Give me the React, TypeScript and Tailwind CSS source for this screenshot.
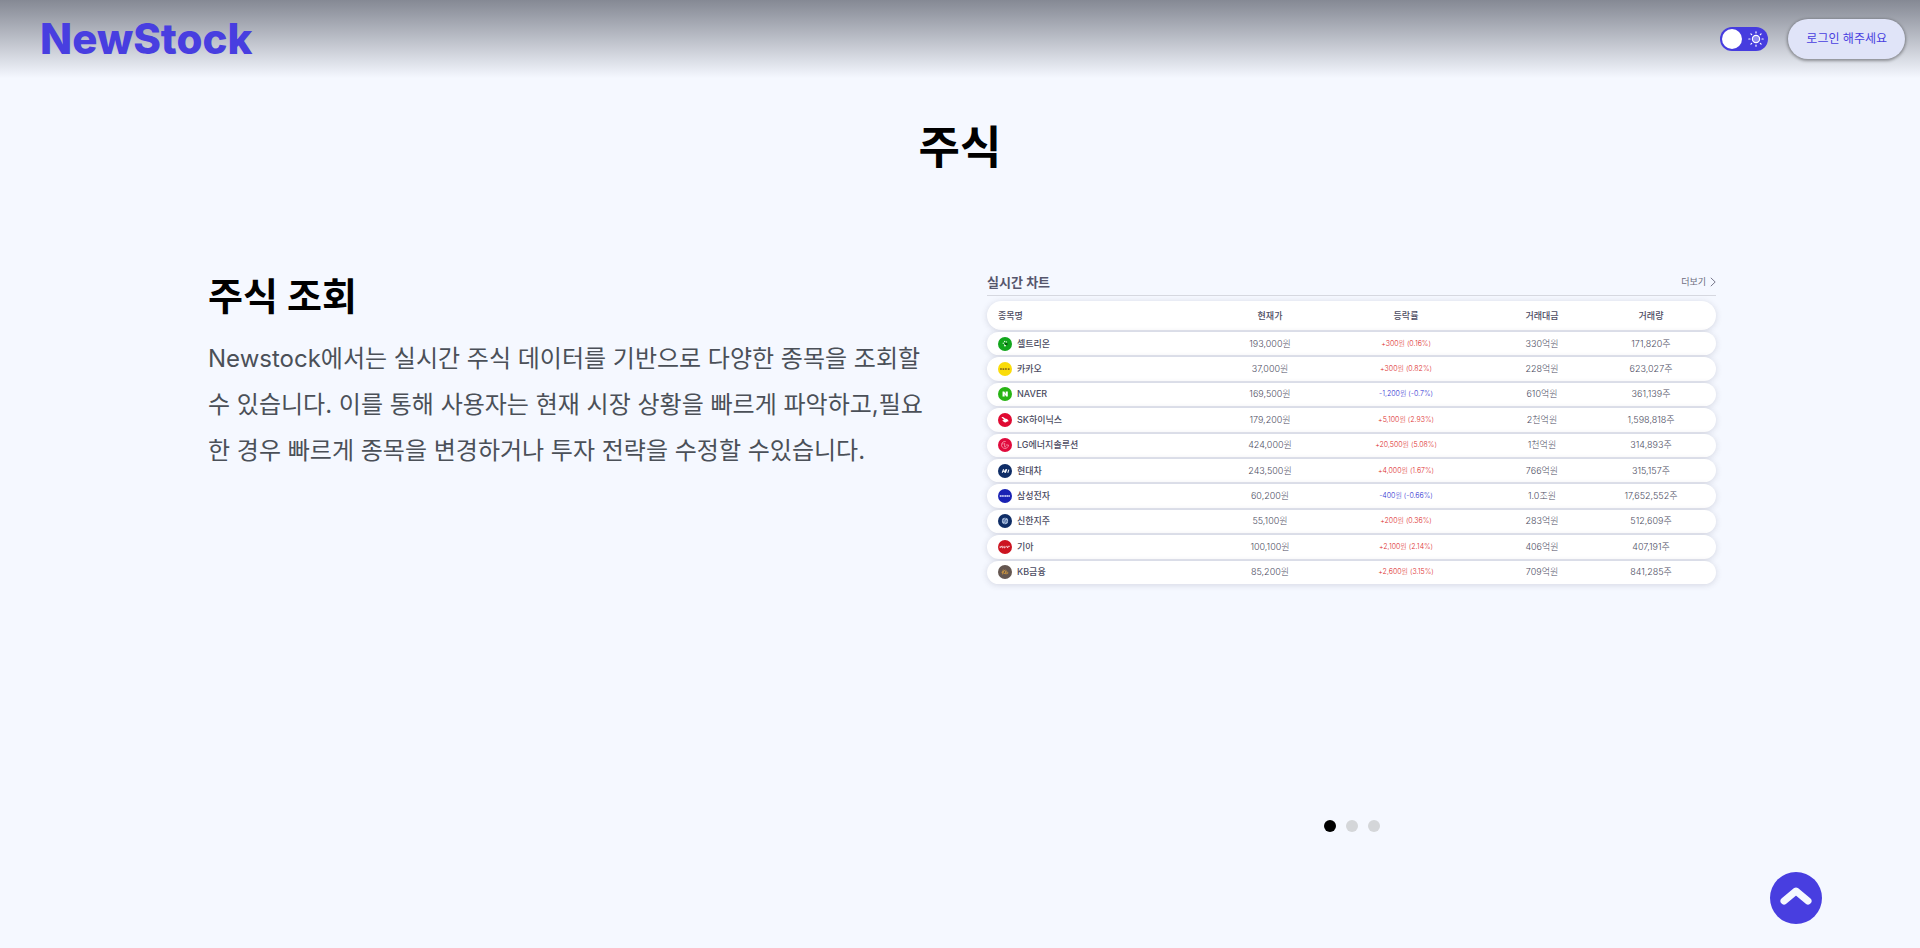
import type { ReactNode } from "react";

type Stock = {
  name: string;
  color: string;
  mark: ReactNode;
  price: string;
  change: string;
  amount: string;
  volume: string;
};

const stocks: Stock[] = [
  {
    name: "셀트리온",
    color: "#12a61c",
    mark: (
      <g fill="#dff5df">
        <circle cx="15" cy="18" r="2" />
        <circle cx="19" cy="13" r="2" />
        <circle cx="24" cy="14" r="2" />
        <circle cx="20" cy="24" r="3" />
        <rect x="20" y="17" width="7" height="6" fill="#0a5c10" />
      </g>
    ),
    price: "193,000원",
    change: "+300원 (0.16%)",
    amount: "330억원",
    volume: "171,820주",
  },
  {
    name: "카카오",
    color: "#fadc0a",
    mark: (
      <g fill="#8a6a14">
        <path d="M6 17h2v2l2-2h2l-2 3 2 3h-2l-2-2v2H6zM13 18h5v5h-5zM20 17h2v2l2-2h2l-2 3 2 3h-2l-2-2v2h-2zM28 18h5v5h-5z" />
      </g>
    ),
    price: "37,000원",
    change: "+300원 (0.82%)",
    amount: "228억원",
    volume: "623,027주",
  },
  {
    name: "NAVER",
    color: "#28b414",
    mark: <path fill="#fff" d="M13 13h5l4 7v-7h6v14h-5l-4-7v7h-6z" />,
    price: "169,500원",
    change: "-1,200원 (-0.7%)",
    amount: "610억원",
    volume: "361,139주",
  },
  {
    name: "SK하이닉스",
    color: "#e00a32",
    mark: (
      <path fill="#fff" d="M10 13c4-3 7 0 10 3 4 0 8 2 11 8-5-1-6 3-10 3s-5-4-9-5c2-2 4-2 5-1-1-4-4-6-7-8z" />
    ),
    price: "179,200원",
    change: "+5,100원 (2.93%)",
    amount: "2천억원",
    volume: "1,598,818주",
  },
  {
    name: "LG에너지솔루션",
    color: "#e00a3c",
    mark: (
      <g fill="none" stroke="#ffb4c4" strokeWidth="2">
        <path d="M22 10a10 10 0 1 0 8 10h-7" />
        <path d="M19 14v11h4" />
        <circle cx="14" cy="17" r="1" />
      </g>
    ),
    price: "424,000원",
    change: "+20,500원 (5.08%)",
    amount: "1천억원",
    volume: "314,893주",
  },
  {
    name: "현대차",
    color: "#0f2d66",
    mark: (
      <path d="M12 25l4-10M21 25l4-10M14 21c4 0 6-2 9-2M19 25l4-10M28 25l3-9" fill="none" stroke="#fff" strokeWidth="3" />
    ),
    price: "243,500원",
    change: "+4,000원 (1.67%)",
    amount: "766억원",
    volume: "315,157주",
  },
  {
    name: "삼성전자",
    color: "#1a22b4",
    mark: <path d="M5 20h30" stroke="#e6e8ff" strokeWidth="4" strokeDasharray="4 1" />,
    price: "60,200원",
    change: "-400원 (-0.66%)",
    amount: "1.0조원",
    volume: "17,652,552주",
  },
  {
    name: "신한지주",
    color: "#0f2d66",
    mark: (
      <g>
        <circle cx="20" cy="20" r="9" fill="#a9bddc" />
        <path d="M23 13c-6 0-7 4-3 6s4 6-3 8M14 17l4 6M23 17l3 5" fill="none" stroke="#2c4f8c" strokeWidth="2" />
      </g>
    ),
    price: "55,100원",
    change: "+200원 (0.36%)",
    amount: "283억원",
    volume: "512,609주",
  },
  {
    name: "기아",
    color: "#cc1420",
    mark: (
      <path d="M6 23v-5M6 21l6-4v6l6-5v5l6-5 4 5v-5h6" fill="none" stroke="#fff" strokeWidth="2" />
    ),
    price: "100,100원",
    change: "+2,100원 (2.14%)",
    amount: "406억원",
    volume: "407,191주",
  },
  {
    name: "KB금융",
    color: "#645650",
    mark: (
      <path d="M10 21l4-2M15 13l-2 14M21 14l-8 7 7 4M20 20h6c3 0 3 5 0 5h-5l2-10" fill="none" stroke="#e0a03c" strokeWidth="2" />
    ),
    price: "85,200원",
    change: "+2,600원 (3.15%)",
    amount: "709억원",
    volume: "841,285주",
  },
];

const rowGrid =
  "grid grid-cols-[215fr_136fr_136fr_136fr_82fr_24fr] items-center rounded-full bg-white shadow-[0_1px_6px_rgba(60,60,90,0.18)]";

function Header() {
  return (
    <header className="flex h-[78px] items-center justify-between bg-linear-to-b from-[#858994] to-[#f5f8ff] pr-[15px] pl-10">
      <a href="#" className="text-[42px] leading-none font-extrabold text-[#483ee0]">
        NewStock
      </a>
      <div className="flex items-center gap-5">
        <button
          type="button"
          role="switch"
          aria-checked="false"
          aria-label="테마 전환"
          className="flex h-6 w-12 items-center justify-between rounded-full bg-[#463cdf] pr-1 pl-0.5"
        >
          <span className="size-5 rounded-full bg-white" />
          <svg viewBox="0 0 16 16" className="size-4" fill="none" stroke="#fff" strokeLinecap="round">
            <circle cx="8" cy="8" r="3.6" fill="#8f8aee" strokeWidth="1.2" />
            <path
              d="M8 .8v1.2M8 14v1.2M.8 8H2M14 8h1.2M2.9 2.9l.8.8M12.3 12.3l.8.8M2.9 13.1l.8-.8M12.3 3.7l.8-.8"
              strokeWidth="1.2"
            />
          </svg>
        </button>
        <button
          type="button"
          className="h-10 rounded-full bg-[#e0e4f8] px-[18px] text-xs text-[#483ee0] shadow-[0_1px_3px_1px_rgba(0,0,0,0.35)]"
        >
          로그인 해주세요
        </button>
      </div>
    </header>
  );
}

function StockTable() {
  return (
    <div className="text-[#4c4c62]">
      <div className="flex h-6 items-center justify-between border-b border-[#d6d8e0] pb-1">
        <h4 className="text-[13px] leading-5 font-semibold text-[#56566c]">실시간 차트</h4>
        <a href="#" className="flex items-center gap-1 text-[9px] leading-5 text-[#6b6b7c]">
          더보기
          <svg viewBox="0 0 6 10" className="h-[10px] w-[6px]" fill="none" stroke="#77778a">
            <path d="M.8.8 5.2 5 .8 9.2" />
          </svg>
        </a>
      </div>
      <table className="mt-[5px] block text-[9px] leading-3">
        <thead className="block">
          <tr className={`${rowGrid} h-[29px] font-medium`}>
            <th scope="col" className="pl-[11px] text-left font-medium">종목명</th>
            <th scope="col" className="font-medium">현재가</th>
            <th scope="col" className="font-medium">등락률</th>
            <th scope="col" className="font-medium">거래대금</th>
            <th scope="col" className="font-medium">거래량</th>
          </tr>
        </thead>
        <tbody className="mt-0.5 grid h-[252px] auto-rows-fr gap-0.5 text-center font-light">
          {stocks.map((s) => (
            <tr key={s.name} className={rowGrid}>
              <td className="flex items-center gap-[5px] pl-[11px] font-medium">
                <svg viewBox="0 0 40 40" className="size-[14px]" aria-hidden="true">
                  <circle cx="20" cy="20" r="20" fill={s.color} />
                  {s.mark}
                </svg>
                {s.name}
              </td>
              <td>{s.price}</td>
              <td className={s.change.startsWith("-") ? "text-[7px] text-[#2a2ad0]" : "text-[7px] text-[#dc2828]"}>
                {s.change}
              </td>
              <td>{s.amount}</td>
              <td className="whitespace-nowrap">{s.volume}</td>
            </tr>
          ))}
        </tbody>
      </table>
    </div>
  );
}

export default function App() {
  return (
    <div className="min-h-screen bg-[#f5f8ff] font-['Inter','Noto_Sans_CJK_KR',sans-serif] text-black" lang="ko">
      <Header />
      <main className="mx-auto w-4/5">
        <h2 className="pt-[38px] text-center text-[45px] leading-16 font-bold">주식</h2>
        <section className="mt-[88px] grid grid-cols-2">
          <div className="pr-8 pl-4">
            <h3 className="text-[38px] leading-14 font-bold">주식 조회</h3>
            <p className="mt-3 text-2xl leading-[46px] text-[#4b5058]">
              Newstock에서는 실시간 주식 데이터를 기반으로 다양한 종목을 조회할 수 있습니다. 이를 통해 사용자는 현재 시장
              상황을 빠르게 파악하고,필요한 경우 빠르게 종목을 변경하거나 투자 전략을 수정할 수있습니다.
            </p>
          </div>
          <div className="flex min-h-[564px] flex-col justify-between pt-1 pr-3 pl-[27px]">
            <StockTable />
            <div className="flex justify-center gap-[10px]">
              <button type="button" aria-label="슬라이드 1" className="size-3 rounded-full bg-black" />
              <button type="button" aria-label="슬라이드 2" className="size-3 rounded-full bg-[#d4d6d9]" />
              <button type="button" aria-label="슬라이드 3" className="size-3 rounded-full bg-[#d4d6d9]" />
            </div>
          </div>
        </section>
      </main>
      <button
        type="button"
        aria-label="맨 위로"
        className="fixed right-[98px] bottom-6 flex size-[52px] items-center justify-center rounded-full bg-[#483ee0] pb-1"
      >
        <svg viewBox="0 0 32 18" className="h-[18px] w-8" fill="none" stroke="#f5f8ff" strokeWidth="7" strokeLinecap="round" strokeLinejoin="round">
          <path d="M4 14 16 4l12 10" />
        </svg>
      </button>
    </div>
  );
}
